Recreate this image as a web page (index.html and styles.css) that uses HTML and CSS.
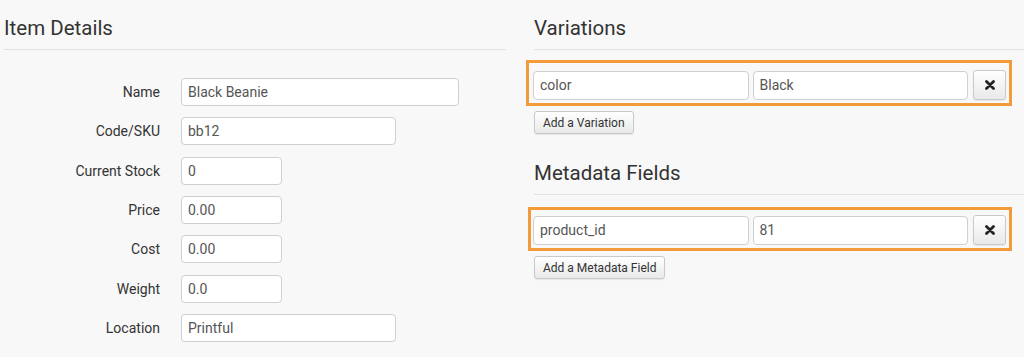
FILE: index.html
```html
<!DOCTYPE html>
<html>
<head>
<meta charset="utf-8">
<link rel="stylesheet" href="styles.css">
</head>
<body>
<div class="page">
  <section class="col col-left">
    <h2 class="section-title">Item Details</h2>
    <div class="details">
      <div class="row"><label class="label">Name</label><input class="field w-lg" value="Black Beanie"></div>
      <div class="row"><label class="label">Code/SKU</label><input class="field w-md" value="bb12"></div>
      <div class="row"><label class="label">Current Stock</label><input class="field w-sm" value="0"></div>
      <div class="row"><label class="label">Price</label><input class="field w-sm" value="0.00"></div>
      <div class="row"><label class="label">Cost</label><input class="field w-sm" value="0.00"></div>
      <div class="row"><label class="label">Weight</label><input class="field w-sm" value="0.0"></div>
      <div class="row"><label class="label">Location</label><input class="field w-md" value="Printful"></div>
    </div>
  </section>
  <section class="col col-right">
    <h2 class="section-title">Variations</h2>
    <div class="highlight">
      <input class="field pair" value="color">
      <input class="field pair" value="Black">
      <button class="btn btn-remove" aria-label="Remove"><svg width="10" height="10" viewBox="0 0 10 10"><path d="M1.5 1.5 L8.5 8.5 M8.5 1.5 L1.5 8.5" stroke="#222" stroke-width="2.8" stroke-linecap="round"/></svg></button>
    </div>
    <button class="btn btn-add">Add a Variation</button>

    <h2 class="section-title second">Metadata Fields</h2>
    <div class="highlight tight">
      <input class="field pair" value="product_id">
      <input class="field pair" value="81">
      <button class="btn btn-remove" aria-label="Remove"><svg width="10" height="10" viewBox="0 0 10 10"><path d="M1.5 1.5 L8.5 8.5 M8.5 1.5 L1.5 8.5" stroke="#222" stroke-width="2.8" stroke-linecap="round"/></svg></button>
    </div>
    <button class="btn btn-add">Add a Metadata Field</button>
  </section>
</div>
</body>
</html>
```
FILE: styles.css
```css
html, body {
  margin: 0;
  padding: 0;
  background: #f8f8f8;
  height: 357px;
  overflow: hidden;
}
body {
  font-family: Roboto, "Liberation Sans", Arial, sans-serif;
  color: #333;
}
.page {
  display: flex;
  gap: 28px;
  padding-left: 4px;
}
.col-left {
  width: 502px;
  flex: none;
}
.col-right {
  flex: 1;
  min-width: 0;
}
.section-title {
  margin: 15px 0 0;
  font-size: 20.5px;
  font-weight: 400;
  line-height: 26px;
  padding-bottom: 8px;
  border-bottom: 1px solid #e2e2e2;
  color: #333;
}
.section-title.second {
  margin-top: 26px;
}
.details {
  margin-top: 28px;
  display: flex;
  flex-direction: column;
  gap: 11.33px;
}
.row {
  display: flex;
  align-items: center;
  gap: 21px;
}
.label {
  width: 156px;
  text-align: right;
  font-size: 14px;
  color: #333;
}
.field {
  box-sizing: border-box;
  height: 28px;
  border: 1px solid #cfcfcf;
  border-radius: 4px;
  background: #fff;
  padding: 0 6px;
  font-family: inherit;
  font-size: 14px;
  color: #555;
  margin: 0;
  outline: none;
}
.w-lg { width: 278px; }
.w-md { width: 215px; }
.w-sm { width: 101px; }
.highlight {
  margin: 10px 12px 0 -8px;
  border: 3px solid #f39a3b;
  padding: 7px 3px 3px 4px;
  display: flex;
  align-items: center;
  gap: 4px;
}
.highlight.tight {
  margin-top: 12px;
  margin-left: -6px;
  padding: 5px 3px 3px 2px;
}
.pair {
  flex: 1;
  min-width: 0;
  height: 29px;
}
.btn {
  box-sizing: border-box;
  border: 1px solid #c9c9c9;
  border-radius: 3px;
  background: linear-gradient(#ffffff, #e9e9e9);
  box-shadow: 0 1px 1px rgba(0,0,0,0.08);
  font-family: inherit;
  color: #333;
  cursor: pointer;
  margin: 0;
}
.btn-remove {
  width: 33px;
  height: 30px;
  margin-left: 1px;
  display: flex;
  align-items: center;
  justify-content: center;
  padding: 0;
}
.btn-add {
  display: block;
  margin-top: 5px;
  height: 23px;
  padding: 0 8px;
  font-size: 12px;
}
```
